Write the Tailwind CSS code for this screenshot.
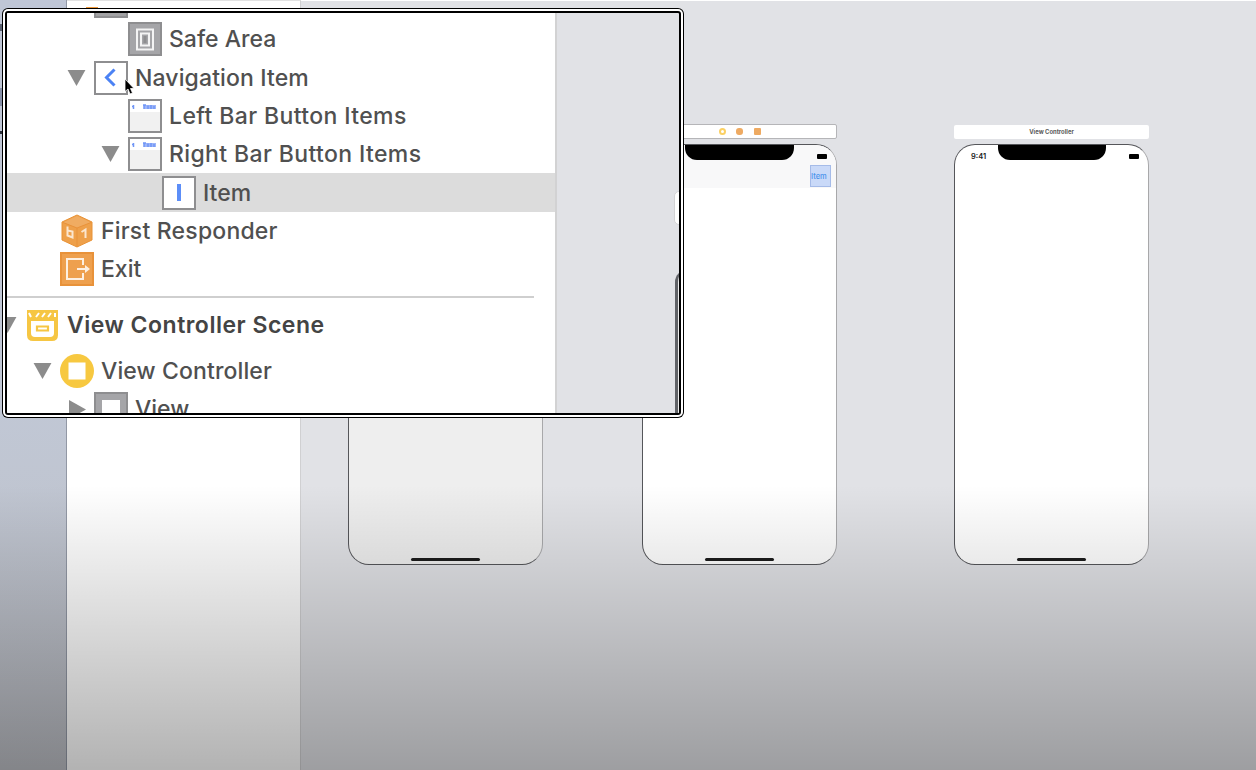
<!DOCTYPE html>
<html lang="en">
<head>
<meta charset="utf-8">
<title>Storyboard</title>
<script src="https://cdn.jsdelivr.net/npm/@tailwindcss/browser@4"></script>
</head>
<body class="h-[770px] w-[1256px] overflow-hidden bg-[#e1e2e6] font-['Inter','Liberation_Sans',sans-serif]">
<main class="relative flex h-full w-full overflow-hidden">
  <!-- Desktop strip, outline column, canvas -->
  <aside class="relative h-full w-[67px] shrink-0 border-r border-[#9298a5] bg-linear-to-b from-[#bfc6d6] via-[#c1c8d6] to-[#bcbec4]">
    <div class="absolute top-[24px] left-0 h-[7px] w-[2px] bg-[#596070]"></div>
    <div class="absolute top-[88px] left-0 h-[18px] w-[2px] bg-[#8790a8]"></div>
    <div class="absolute top-[131px] left-0 h-[3px] w-[2px] bg-[#2b2f3a]"></div>
  </aside>
  <aside class="relative h-full w-[234px] shrink-0 border-t border-r border-t-[#e2e2e2] border-r-[#d0d0d2] bg-white">
    <div class="absolute top-[6px] left-[19px] h-[5px] w-[12px] bg-[#f09a3c]"></div>
  </aside>
  <section class="h-full flex-1 border-t border-white bg-[#e1e2e6]"></section>

  <!-- Canvas scenes -->
  <div class="absolute top-[144px] left-[348px] h-[421px] w-[195px] rounded-[21px] border border-[#55565a] border-r-[#a8a8aa] bg-[#eeeeee]">
    <div class="absolute bottom-[3px] left-[62px] h-[3px] w-[69px] rounded-full bg-[#1c1c1c]"></div>
  </div>

  <div class="absolute top-[124px] left-[642px] flex h-[15px] w-[195px] items-center justify-center gap-[10.5px] rounded-[2px] border border-[#b5b5b8] bg-white">
    <span class="size-[7px] rounded-full border-2 border-[#fbd063] bg-white"></span>
    <span class="size-[7px] rounded-[3px] bg-[#eeaa62]"></span>
    <span class="size-[7px] rounded-[1px] bg-[#eeaa62]"></span>
  </div>
  <div class="absolute top-[144px] left-[642px] h-[421px] w-[195px] overflow-hidden rounded-[21px] border border-[#55565a] border-r-[#a8a8aa] bg-white">
    <div class="h-[43px] bg-[#f8f8f9]"></div>
    <div class="absolute top-0 left-[42px] h-[15px] w-[109px] rounded-b-[12px] bg-black"></div>
    <div class="absolute top-[9px] left-[174px] h-[5px] w-[10px] rounded-[1px] bg-black"></div>
    <div class="absolute top-[20px] left-[167px] flex h-[22px] w-[21px] items-center border border-[#a5bbe8] bg-[#c9d9f8] pt-px text-[7.5px] leading-none font-medium text-[#4b93ec]">Item</div>
    <div class="absolute bottom-[3px] left-[62px] h-[3px] w-[69px] rounded-full bg-[#1c1c1c]"></div>
  </div>

  <div class="absolute top-[125px] left-[954px] flex h-[14px] w-[195px] items-center justify-center rounded-[2px] bg-white text-[5.900px] leading-none font-bold text-[#5a5a5a]">View Controller</div>
  <div class="absolute top-[144px] left-[954px] h-[421px] w-[195px] overflow-hidden rounded-[21px] border border-[#55565a] border-r-[#a8a8aa] bg-white">
    <div class="absolute top-[8px] left-[16px] text-[7.500px] leading-none font-semibold text-[#222]">9:41</div>
    <div class="absolute top-0 left-[43px] h-[15px] w-[108px] rounded-b-[12px] bg-black"></div>
    <div class="absolute top-[9px] left-[174px] h-[5px] w-[10px] rounded-[1px] bg-black"></div>
    <div class="absolute bottom-[3px] left-[62px] h-[3px] w-[69px] rounded-full bg-[#1c1c1c]"></div>
  </div>

  <!-- Bottom shade -->
  <div class="absolute inset-x-0 bottom-0 h-[285px] bg-linear-to-b from-black/0 to-black/30"></div>

  <!-- Magnifier -->
  <div class="absolute top-[8px] left-[2px] h-[410px] w-[682px] rounded-[6px] bg-black p-px">
   <div class="h-full w-full rounded-[5px] bg-white p-[2px]">
    <div class="h-full w-full rounded-[3px] bg-black p-[2px]">
     <div class="relative flex h-full w-full overflow-hidden rounded-[1px] bg-[#e1e2e6]">
      <div class="w-[550px] shrink-0 overflow-hidden border-r-2 border-[#d2d2d3] bg-white text-[23px] leading-none font-medium text-[#505050]">
       <div class="-mt-[31px]">
        <div class="flex h-[38.3px] items-center pl-[87px]"><span class="size-[34px] border-2 border-[#8e8e90] bg-[#a2a2a4]"></span></div>

        <div class="flex h-[38.3px] items-center gap-[7px] pl-[121px]">
          <svg class="size-[34px] shrink-0" viewBox="0 0 34 34" fill="none"><path fill="#a5a5a8" stroke="#8e8e90" stroke-width="2" d="M1 1h32v32H1z"/><path stroke="#f4f4f4" stroke-width="2" d="M9 7.500h16v20H9z"/><path stroke="#f4f4f4" stroke-width="2" d="M13 11.500h8v12h-8z"/><path fill="#8e8e90" d="M15.500 14h3v7h-3z"/></svg>
          <span class="pt-px">Safe Area</span></div>

        <div class="flex h-[38.3px] items-center pl-[60px]">
          <svg class="mr-[8px] h-[16px] w-[19px] shrink-0" viewBox="0 0 19 17"><path fill="#8c8c8c" d="M0 0h19L9.5 17z"/></svg>
          <svg class="mr-[7px] size-[34px] shrink-0" viewBox="0 0 34 34" fill="none"><path fill="#fff" stroke="#8e8e90" stroke-width="2" d="M1 1h32v32H1z"/><path stroke="#4b82f4" stroke-width="3" d="M20.500 8.500 12.500 16.500l8 8"/></svg>
          <span class="pt-px tracking-[0.12px]">Navigation Item</span></div>

        <div class="flex h-[38.3px] items-center gap-[7px] pl-[121px]">
          <svg class="size-[34px] shrink-0" viewBox="0 0 34 34" fill="none"><path fill="#f1f1f1" stroke="#8e8e90" stroke-width="2" d="M1 1h32v32H1z"/><path fill="#fff" d="M2 2h30v11H2z"/><path fill="#9db5f8" d="M16 6h12v4H16z"/><path stroke="#7096f6" stroke-width="1.500" d="M4 7.500h2M5.500 6v4M16 5.500v4.500M15 6h3M20 6.500v3.500M23 6v4M26 7v3"/></svg>
          <span class="pt-px tracking-[0.38px]">Left Bar Button Items</span></div>

        <div class="flex h-[38.3px] items-center pl-[94px]">
          <svg class="mr-[8px] h-[16px] w-[19px] shrink-0" viewBox="0 0 19 17"><path fill="#8c8c8c" d="M0 0h19L9.500 17z"/></svg>
          <svg class="mr-[7px] size-[34px] shrink-0" viewBox="0 0 34 34" fill="none"><path fill="#f1f1f1" stroke="#8e8e90" stroke-width="2" d="M1 1h32v32H1z"/><path fill="#fff" d="M2 2h30v11H2z"/><path fill="#9db5f8" d="M16 6h12v4H16z"/><path stroke="#7096f6" stroke-width="1.500" d="M4 7.500h2M5.500 6v4M16 5.500v4.500M15 6h3M20 6.500v3.500M23 6v4M26 7v3"/></svg>
          <span class="pt-px tracking-[0.38px]">Right Bar Button Items</span></div>

        <div class="flex h-[38.3px] items-center gap-[7px] bg-[#dcdcdc] pl-[155px]">
          <svg class="size-[34px] shrink-0" viewBox="0 0 34 34"><path fill="#fff" stroke="#8e8e90" stroke-width="2" d="M1 1h32v32H1z"/><path fill="#5c8ef8" d="M15 8h4v17h-4z"/></svg>
          <span class="pt-px">Item</span></div>

        <div class="flex h-[38.3px] items-center gap-[7px] pl-[53px]">
          <svg class="size-[34px] shrink-0" viewBox="0 0 34 34" fill="none"><path fill="#eea04a" stroke="#e89236" d="M17 1 32 8v18l-15 7L2 26V8z"/><path fill="#f0ac62" d="M17 2 31 8.500 17 14 3 8.500z"/><path stroke="#e8923a" d="M17 14v19M3 8.500 17 14l14-5.500"/><path stroke="#fbe6cf" stroke-width="2" d="M7.500 12.500v9l5 2v-6l-5-1M21.500 18l4-2.500v8.500"/></svg>
          <span class="pt-px tracking-[0.2px]">First Responder</span></div>

        <div class="flex h-[38.3px] items-center gap-[7px] pl-[53px]">
          <svg class="size-[34px] shrink-0" viewBox="0 0 34 34" fill="none"><path fill="#eea04e" stroke="#e8923a" stroke-width="2" d="M1 1h32v32H1z"/><path stroke="#fdf0e2" stroke-width="2" d="M23 13V7H7v20h16v-6M17 17h11"/><path fill="#fdf0e2" d="m25 13 5 4-5 4z"/></svg>
          <span class="pt-px">Exit</span></div>

        <div class="mt-[8px] h-[2px] w-[527px] bg-[#cfcfcf]"></div>

        <div class="mt-[8px] flex h-[38px] items-center">
          <svg class="-ml-[9px] mr-[10px] h-[16px] w-[19px] shrink-0" viewBox="0 0 19 17"><path fill="#8c8c8c" d="M0 0h19L9.500 17z"/></svg>
          <svg class="mr-[9px] h-[31px] w-[31px] shrink-0" viewBox="0 0 31 31" fill="none"><path fill="#f6c643" d="M0 0h31v25q0 6-6 6H6q-6 0-6-6z"/><path fill="#fff" d="M4 11h23v12q0 4-4 4H8q-4 0-4-4z"/><path stroke="#f6c643" stroke-width="2.200" d="M10 16.500h11v4H10z"/><path stroke="#fff" stroke-width="2" d="m2 3 2 4M9 7l3-4M15 7l3-4M21 7l3-4M28 3v4"/></svg>
          <span class="font-semibold tracking-[0.500px] text-[#444]">View Controller Scene</span></div>

        <div class="mt-[8px] flex h-[38px] items-center pl-[26px]">
          <svg class="mr-[8px] h-[16px] w-[19px] shrink-0" viewBox="0 0 19 17"><path fill="#8c8c8c" d="M0 0h19L9.500 17z"/></svg>
          <svg class="mr-[7px] size-[34px] shrink-0" viewBox="0 0 34 34"><circle cx="17" cy="17" r="17" fill="#f7c840"/><path fill="#fff" d="M8.500 8.500h17v17h-17z"/></svg>
          <span class="pt-px tracking-[0.12px]">View Controller</span></div>

        <div class="flex h-[38px] items-center pl-[62px]">
          <svg class="mr-[8px] h-[19px] w-[17px] shrink-0" viewBox="0 0 17 19"><path fill="#8c8c8c" d="M0 0v19l17-9.500z"/></svg>
          <svg class="mr-[7px] size-[34px] shrink-0" viewBox="0 0 34 34"><path fill="#a5a5a8" stroke="#8e8e90" stroke-width="2" d="M1 1h32v32H1z"/><path fill="#fff" d="M8 8h18v18H8z"/></svg>
          <span class="pt-px">View</span></div>
       </div>
      </div>
      <div class="absolute top-[178px] left-[667px] h-[34px] w-[20px] rounded-[5px] border border-[#d2d2d4] bg-white"></div>
      <div class="absolute top-[257px] left-[668px] h-[200px] w-[60px] rounded-tl-[12px] border-l-[3px] border-[#606267] bg-[#eee]"></div>
      <!-- Pointer -->
      <svg class="absolute top-[65px] left-[117px] h-[18px] w-[12px]" viewBox="0 0 12 18"><path fill="#000" stroke="#fff" stroke-width=".8" d="M1 1v12.500l3-2.500 2 5 2.500-1-2-4.500H10z"/></svg>
     </div>
    </div>
   </div>
  </div>
</main>
</body>
</html>
